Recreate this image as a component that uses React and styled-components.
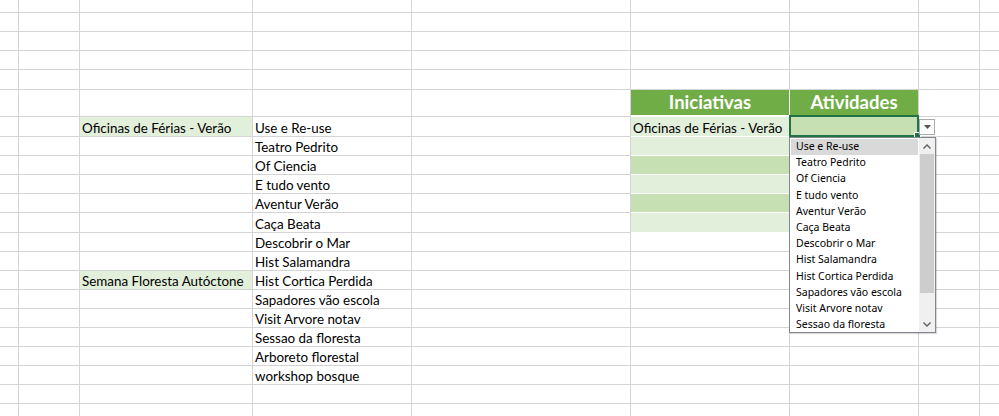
import React from "react";
import styled, { createGlobalStyle } from "styled-components";

// column widths / row heights incl. the 1px gridline on the right / bottom
const COLS = [19, 61, 173, 159, 219, 159, 129, 61, 60];
const ROWS = [13, 19, 19, 19, 20, 27, 20, 19, 19, 19, 19, 20, 19, 19, 19, 19, 19, 19, 19, 19, 19, 19];

const colors = {
  grid: "#d4d4d4",
  header: "#70ad47",
  light: "#e2efda",
  dark: "#c6e0b4",
  select: "#217346",
};

const atividades = [
  "Use e Re-use",
  "Teatro Pedrito",
  "Of Ciencia",
  "E tudo vento",
  "Aventur Verão",
  "Caça Beata",
  "Descobrir o Mar",
  "Hist Salamandra",
  "Hist Cortica Perdida",
  "Sapadores vão escola",
  "Visit Arvore notav",
  "Sessao da floresta",
  "Arboreto florestal",
  "workshop bosque",
];

const cells = {};
cells["5-5"] = { text: "Iniciativas", header: true };
cells["5-6"] = { text: "Atividades", header: true };
cells["6-2"] = { text: "Oficinas de Férias - Verão", fill: colors.light };
cells["14-2"] = { text: "Semana Floresta Autóctone", fill: colors.light };
atividades.forEach((a, i) => {
  cells[`${6 + i}-3`] = { text: a };
});
cells["6-5"] = { text: "Oficinas de Férias - Verão", fill: colors.light, table: true };
cells["6-6"] = { fill: colors.dark, active: true };
["light", "dark", "light", "dark", "light"].forEach((b, i) => {
  cells[`${7 + i}-5`] = { fill: colors[b], table: true };
  cells[`${7 + i}-6`] = { fill: colors[b], table: true };
});

const GlobalStyle = createGlobalStyle`
  html, body {
    margin: 0;
    padding: 0;
    background: #fff;
    overflow: hidden;
  }
`;

const Sheet = styled.div`
  display: grid;
  grid-template-columns: ${COLS.map((c) => `${c}px`).join(" ")};
  grid-template-rows: ${ROWS.map((r) => `${r}px`).join(" ")};
  width: 999px;
  height: 416px;
  overflow: hidden;
  font-family: Lato, "Liberation Sans", sans-serif;
  color: #000;
`;

const Cell = styled.div`
  box-sizing: border-box;
  position: ${(p) => (p.$active ? "relative" : "static")};
  display: flex;
  align-items: flex-end;
  justify-content: ${(p) => (p.$header ? "center" : "flex-start")};
  padding: ${(p) => (p.$header ? "0 0 3px" : "0 0 0 2px")};
  border-right: 1px solid ${(p) => (p.$header && p.$col === 5 ? "#fff" : colors.grid)};
  border-bottom: 1px solid ${(p) => (p.$header || p.$table ? "#fff" : colors.grid)};
  box-shadow: ${(p) => (p.$header ? "inset 0 -1px 0 #fff" : "none")};
  background: ${(p) => (p.$header ? colors.header : p.$fill || "transparent")};
  color: ${(p) => (p.$header ? "#fff" : "#000")};
  font-size: ${(p) => (p.$header ? "18.5px" : "13.4px")};
  font-weight: ${(p) => (p.$header ? 700 : 400)};
  line-height: ${(p) => (p.$header ? "21px" : "16px")};
  white-space: nowrap;
  min-width: 0;
`;

const Selection = styled.div`
  position: absolute;
  top: -2px;
  left: -1px;
  width: 130px;
  height: 22px;
  box-sizing: border-box;
  border: 2px solid ${colors.select};
  pointer-events: none;

  &::after {
    content: "";
    position: absolute;
    right: -4px;
    bottom: -4px;
    width: 5px;
    height: 5px;
    background: ${colors.select};
    border: 1px solid #fff;
  }
`;

const DropButton = styled.div`
  position: absolute;
  left: 129px;
  top: 2px;
  width: 16px;
  height: 16px;
  box-sizing: border-box;
  border: 1px solid #ababab;
  background: #fdfdfd;
  display: flex;
  align-items: center;
  justify-content: center;
  z-index: 5;
`;

const List = styled.div`
  position: absolute;
  left: -1px;
  top: 20px;
  width: 147px;
  height: 196px;
  box-sizing: border-box;
  border: 1px solid #828790;
  background: #fff;
  box-shadow: 1px 1px 1px rgba(0, 0, 0, 0.15);
  display: flex;
  z-index: 10;
`;

const Options = styled.div`
  flex: 1;
  padding: 1px 1px 0;
  overflow: hidden;
`;

const Option = styled.div`
  height: 16.2px;
  line-height: 15px;
  padding-left: 5px;
  font-family: "Noto Sans", "Open Sans", sans-serif;
  font-size: 10.5px;
  color: #000;
  white-space: nowrap;
  background: ${(p) => (p.$hover ? "#d9d9d9" : "transparent")};
`;

const ScrollBar = styled.div`
  width: 16px;
  background: #f0f0f0;
  display: flex;
  flex-direction: column;
`;

const ScrollArrow = styled.div`
  height: 16px;
  display: flex;
  align-items: center;
  justify-content: center;
`;

const Track = styled.div`
  flex: 1;
  padding: 0 1px;
`;

const Thumb = styled.div`
  height: 139px;
  background: #cdcdcd;
`;

const Chevron = ({ up }) => (
  <svg width="8" height="5" viewBox="0 0 8 5">
    <polyline
      points={up ? "0.5,4.5 4,1 7.5,4.5" : "0.5,0.5 4,4 7.5,0.5"}
      fill="none"
      stroke="#606060"
      strokeWidth="1.4"
    />
  </svg>
);

const Dropdown = () => (
  <>
    <Selection />
    <DropButton>
      <svg width="7" height="4" viewBox="0 0 7 4">
        <polygon points="0,0 7,0 3.5,4" fill="#555" />
      </svg>
    </DropButton>
    <List>
      <Options>
        {atividades.slice(0, 12).map((a, i) => (
          <Option key={a} $hover={i === 0}>
            {a}
          </Option>
        ))}
      </Options>
      <ScrollBar>
        <ScrollArrow>
          <Chevron up />
        </ScrollArrow>
        <Track>
          <Thumb />
        </Track>
        <ScrollArrow>
          <Chevron />
        </ScrollArrow>
      </ScrollBar>
    </List>
  </>
);

const App = () => {
  return (
    <>
      <GlobalStyle />
      <Sheet>
        {ROWS.map((_, r) =>
          COLS.map((_, c) => {
            const cell = cells[`${r}-${c}`] || {};
            return (
              <Cell
                key={`${r}-${c}`}
                $col={c}
                $header={cell.header}
                $table={cell.table}
                $fill={cell.fill}
                $active={cell.active}
              >
                {cell.text}
                {cell.active && <Dropdown />}
              </Cell>
            );
          })
        )}
      </Sheet>
    </>
  );
};

export default App;
